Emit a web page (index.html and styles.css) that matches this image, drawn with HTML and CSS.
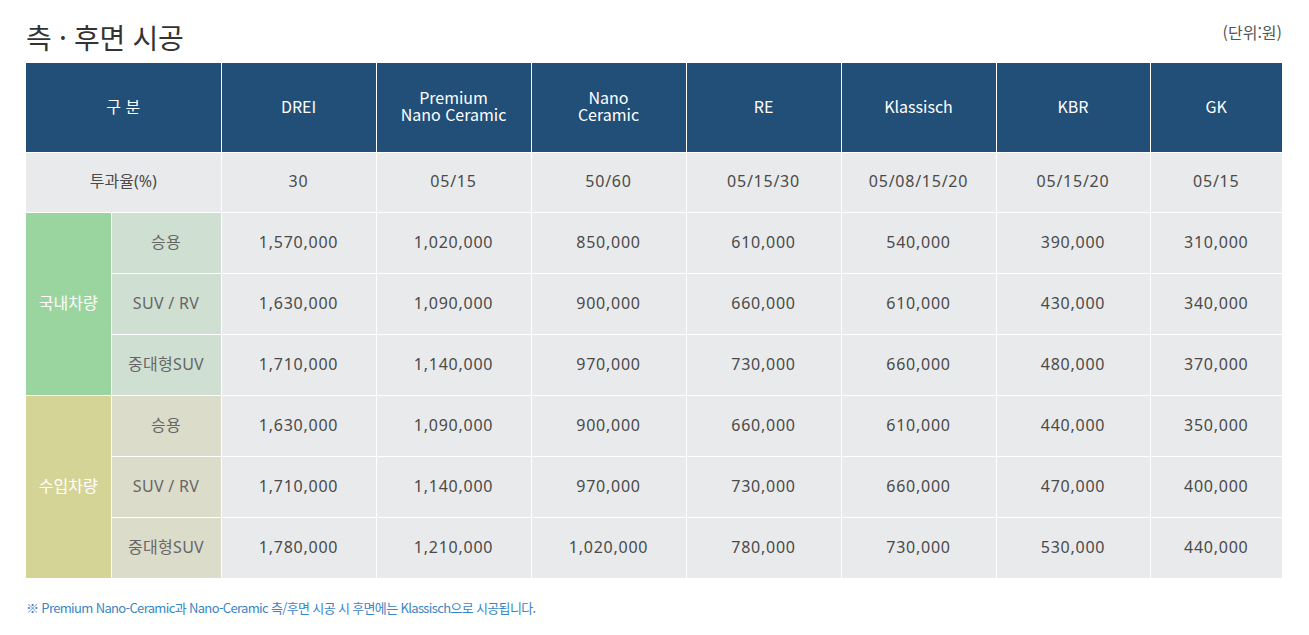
FILE: index.html
```html
<!DOCTYPE html>
<html lang="ko">
<head>
<meta charset="utf-8">
<link rel="stylesheet" href="styles.css">
</head>
<body>
<div class="wrap">
  <div class="head">
    <h2 class="title">측 · 후면 시공</h2>
    <span class="unit">(단위:원)</span>
  </div>
  <table class="price">
    <colgroup>
      <col class="c1"><col class="c2"><col class="c3"><col class="c3"><col class="c3"><col class="c3"><col class="c3"><col class="c4"><col class="c5">
    </colgroup>
    <thead>
      <tr>
        <th colspan="2">구 분</th>
        <th>DREI</th>
        <th>Premium<br>Nano Ceramic</th>
        <th>Nano<br>Ceramic</th>
        <th>RE</th>
        <th>Klassisch</th>
        <th>KBR</th>
        <th>GK</th>
      </tr>
    </thead>
    <tbody>
      <tr class="tint">
        <td colspan="2" class="lbl">투과율(%)</td>
        <td>30</td><td>05/15</td><td>50/60</td><td>05/15/30</td><td>05/08/15/20</td><td>05/15/20</td><td>05/15</td>
      </tr>
      <tr>
        <td rowspan="3" class="grp dom">국내차량</td>
        <td class="sub dom-sub">승용</td>
        <td>1,570,000</td><td>1,020,000</td><td>850,000</td><td>610,000</td><td>540,000</td><td>390,000</td><td>310,000</td>
      </tr>
      <tr>
        <td class="sub dom-sub">SUV / RV</td>
        <td>1,630,000</td><td>1,090,000</td><td>900,000</td><td>660,000</td><td>610,000</td><td>430,000</td><td>340,000</td>
      </tr>
      <tr>
        <td class="sub dom-sub">중대형SUV</td>
        <td>1,710,000</td><td>1,140,000</td><td>970,000</td><td>730,000</td><td>660,000</td><td>480,000</td><td>370,000</td>
      </tr>
      <tr>
        <td rowspan="3" class="grp imp">수입차량</td>
        <td class="sub imp-sub">승용</td>
        <td>1,630,000</td><td>1,090,000</td><td>900,000</td><td>660,000</td><td>610,000</td><td>440,000</td><td>350,000</td>
      </tr>
      <tr>
        <td class="sub imp-sub">SUV / RV</td>
        <td>1,710,000</td><td>1,140,000</td><td>970,000</td><td>730,000</td><td>660,000</td><td>470,000</td><td>400,000</td>
      </tr>
      <tr>
        <td class="sub imp-sub">중대형SUV</td>
        <td>1,780,000</td><td>1,210,000</td><td>1,020,000</td><td>780,000</td><td>730,000</td><td>530,000</td><td>440,000</td>
      </tr>
    </tbody>
  </table>
  <p class="note">※ Premium Nano-Ceramic과 Nano-Ceramic 측/후면 시공 시 후면에는 Klassisch으로 시공됩니다.</p>
</div>
</body>
</html>
```
FILE: styles.css
```css
* { box-sizing: border-box; }
html, body { margin: 0; padding: 0; background: #fff; }
body {
  font-family: "Noto Sans CJK KR", "Noto Sans", sans-serif;
  color: #444;
}
.wrap {
  width: 1256px;
  margin: 0 0 0 26px;
  padding-top: 17px;
}
.head {
  display: flex;
  justify-content: space-between;
  align-items: flex-start;
  height: 46px;
}
.title {
  margin: 0;
  font-size: 28px;
  font-weight: 400;
  color: #333;
  line-height: 40px;
  letter-spacing: -0.3px;
}
.unit {
  font-size: 16px;
  color: #555;
  line-height: 26px;
  margin-top: 2px;
}
.price {
  width: 1256px;
  table-layout: fixed;
  border-collapse: collapse;
  font-size: 16px;
  text-align: center;
}
.c1 { width: 85px; }
.c2 { width: 110px; }
.c3 { width: 155px; }
.c4 { width: 154px; }
.c5 { width: 132px; }
.price th, .price td {
  border: 1px solid #fff;
  padding: 0;
  vertical-align: middle;
}
.price tr > :first-child { border-left: 0; }
.price tr > :last-child { border-right: 0; }
.price thead tr > th { border-top: 0; }
.price tbody tr:last-child > td { border-bottom: 0; }
.price th {
  background: #214f78;
  color: #fff;
  font-weight: 400;
  height: 89px;
  line-height: 17px;
  padding-bottom: 2px;
}
.price td {
  font-family: "Noto Sans", "Noto Sans CJK KR", sans-serif;
  background: #e9eaec;
  color: #4a4a4a;
  height: 61px;
  line-height: 20px;
  padding-bottom: 2px;
  letter-spacing: 0.75px;
}
.price td.lbl { letter-spacing: 0; }
.price tr.tint td { height: 60px; }
.grp {
  color: #fff !important;
  letter-spacing: 0 !important;
}
.dom { background: #9ad49e !important; }
.imp { background: #d4d497 !important; }
.sub { color: #666 !important; letter-spacing: 0.3px !important; }
.dom-sub { background: #cfdfd2 !important; }
.imp-sub { background: #dcdccb !important; }
.note {
  margin: 19px 0 0;
  font-size: 13px;
  color: #3a86c4;
  letter-spacing: -0.65px;
}
```
